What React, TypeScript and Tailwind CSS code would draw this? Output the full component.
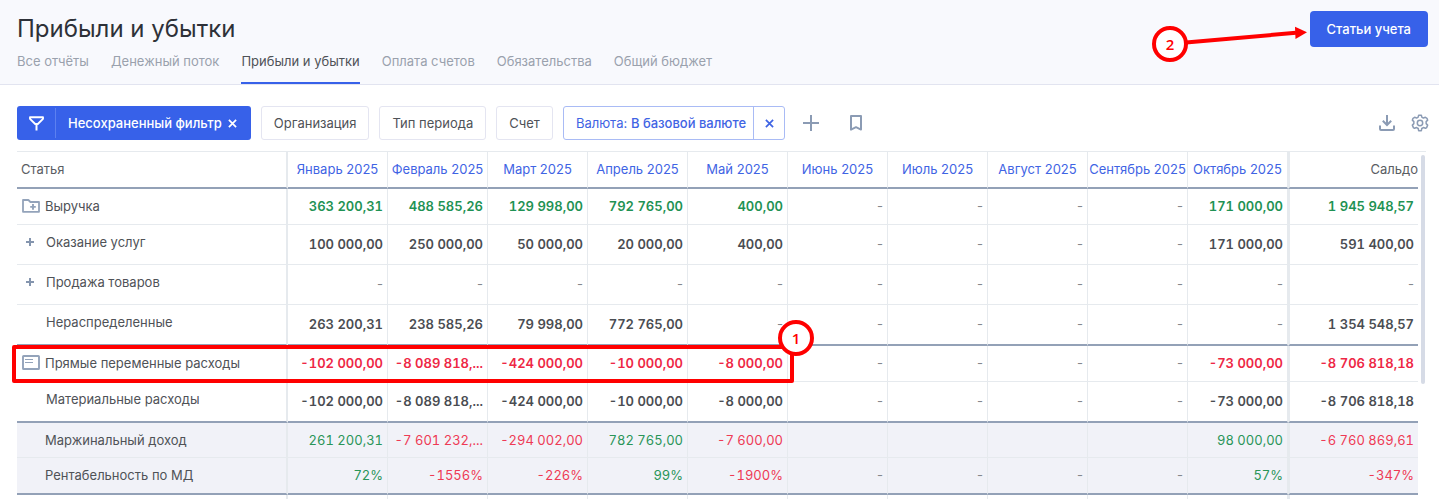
import React from "react";

type Tone = "green" | "red" | "dark";
type Kind = "group" | "sub" | "total";

interface Row {
  name: string;
  kind: Kind;
  icon?: "folder" | "card" | "plus";
  tone?: Tone;
  height: string;
  thick?: boolean;
  values: string[];
}

const months = [
  "Январь 2025",
  "Февраль 2025",
  "Март 2025",
  "Апрель 2025",
  "Май 2025",
  "Июнь 2025",
  "Июль 2025",
  "Август 2025",
  "Сентябрь 2025",
  "Октябрь 2025",
];

const rows: Row[] = [
  {
    name: "Выручка", kind: "group", icon: "folder", tone: "green", height: "h-[36px]",
    values: ["363 200,31", "488 585,26", "129 998,00", "792 765,00", "400,00", "-", "-", "-", "-", "171 000,00", "1 945 948,57"],
  },
  {
    name: "Оказание услуг", kind: "sub", icon: "plus", height: "h-[40px]",
    values: ["100 000,00", "250 000,00", "50 000,00", "20 000,00", "400,00", "-", "-", "-", "-", "171 000,00", "591 400,00"],
  },
  {
    name: "Продажа товаров", kind: "sub", icon: "plus", height: "h-[40px]",
    values: ["-", "-", "-", "-", "-", "-", "-", "-", "-", "-", "-"],
  },
  {
    name: "Нераспределенные", kind: "sub", height: "h-[41px]", thick: true,
    values: ["263 200,31", "238 585,26", "79 998,00", "772 765,00", "-", "-", "-", "-", "-", "-", "1 354 548,57"],
  },
  {
    name: "Прямые переменные расходы", kind: "group", icon: "card", tone: "red", height: "h-[36px]",
    values: ["-102 000,00", "-8 089 818,...", "-424 000,00", "-10 000,00", "-8 000,00", "-", "-", "-", "-", "-73 000,00", "-8 706 818,18"],
  },
  {
    name: "Материальные расходы", kind: "sub", height: "h-[41px]", thick: true,
    values: ["-102 000,00", "-8 089 818,...", "-424 000,00", "-10 000,00", "-8 000,00", "-", "-", "-", "-", "-73 000,00", "-8 706 818,18"],
  },
  {
    name: "Маржинальный доход", kind: "total", height: "h-[35px]",
    values: ["261 200,31", "-7 601 232,...", "-294 002,00", "782 765,00", "-7 600,00", "", "", "", "", "98 000,00", "-6 760 869,61"],
  },
  {
    name: "Рентабельность по МД", kind: "total", height: "h-[37px]", thick: true,
    values: ["72%", "-1556%", "-226%", "99%", "-1900%", "-", "-", "-", "-", "57%", "-347%"],
  },
];

function valueStyle(row: Row, value: string): string {
  if (value === "-") return "text-[#85888d] font-normal";
  if (row.kind === "total") return value.startsWith("-") ? "tabular-nums text-[#ee3a55]" : "tabular-nums text-[#2a9558]";
  if (row.tone === "green") return "tabular-nums text-[#1f9254] font-semibold";
  if (row.tone === "red") return "tabular-nums text-[#ee2745] font-semibold";
  return "tabular-nums text-[#4a4d52] font-semibold";
}

function RowIcon({ icon }: { icon?: Row["icon"] }) {
  if (icon === "folder")
    return (
      <svg className="h-[14px] w-[18px] shrink-0" viewBox="0 0 18 14" fill="none" aria-hidden="true">
        <path d="M1 12.8V1h5.4l2 2H17v9.8Z" stroke="#93a3ba" strokeWidth="1.8" strokeLinejoin="round" />
        <path d="M8.2 7.9h5.6M11 5.1v5.6" stroke="#93a3ba" strokeWidth="1.9" />
      </svg>
    );
  if (icon === "card")
    return (
      <svg className="h-[15px] w-[18px] shrink-0" viewBox="0 0 18 15" fill="none" aria-hidden="true">
        <rect x="1" y="1" width="16" height="13" rx="0.6" stroke="#93a3ba" strokeWidth="1.9" />
        <path d="M3 4.5h8M3 7.5h8" stroke="#93a3ba" strokeWidth="1.2" />
      </svg>
    );
  if (icon === "plus")
    return (
      <svg className="h-[8px] w-[8px] shrink-0" viewBox="0 0 8 8" aria-hidden="true">
        <path d="M0 4h8M4 0v8" stroke="#8495ae" strokeWidth="2" />
      </svg>
    );
  return null;
}

function Cross({ className }: { className: string }) {
  return (
    <svg className={className} viewBox="0 0 10 10" fill="none" stroke="currentColor" aria-hidden="true">
      <path d="M1 1l8 8M9 1L1 9" strokeWidth="1.9" />
    </svg>
  );
}

function Header() {
  const tabs = ["Все отчёты", "Денежный поток", "Прибыли и убытки", "Оплата счетов", "Обязательства", "Общий бюджет"];
  return (
    <header className="flex items-start justify-between border-b border-[#e2e4f0] bg-[#f8f9fd] pr-[11px] pl-[17px]">
      <div className="pt-[13px]">
        <h1 className="text-2xl text-[#2e3138]">Прибыли и убытки</h1>
        <nav className="mt-[6px] flex gap-[22px] text-[13px] leading-5">
          {tabs.map((t) => (
            <a
              key={t}
              href="#"
              className={
                t === "Прибыли и убытки"
                  ? "border-b-2 border-[#3761e9] pb-[11px] whitespace-nowrap text-[#4f5257]"
                  : "border-b-2 border-transparent pb-[11px] whitespace-nowrap text-[#9aa1ad]"
              }
            >
              {t}
            </a>
          ))}
        </nav>
      </div>
      <button className="mt-[11px] h-[36px] rounded bg-[#3761e9] px-[17px] pt-px text-[13px] font-medium text-white">
        Статьи учета
      </button>
    </header>
  );
}

function Toolbar() {
  const chip = "h-[34px] rounded-[3px] border border-[#e4e5f1] px-[12px] pt-px text-[#4f5257]";
  return (
    <div className="flex items-center justify-between pt-[21px] pr-[10px] pb-[11px] pl-[17px] text-[13px]">
      <div className="flex items-center gap-[10px]">
        <div className="flex h-[34px] items-center rounded-[3px] bg-[#3761e9] text-white">
          <button className="flex h-[30px] w-[39px] items-center justify-center border-r border-[#5c80f0]" aria-label="Фильтр">
            <svg className="h-[15px] w-[15px]" viewBox="0 0 15 15" fill="none" stroke="currentColor" aria-hidden="true">
              <path d="M1 1.2h13v1.6L8.8 8h-2.6L1 2.8Z" strokeWidth="1.9" strokeLinejoin="round" />
              <path d="M7.5 8v6.5" strokeWidth="2" />
            </svg>
          </button>
          <button className="flex items-center gap-[6px] pt-px pr-[14px] pl-[12px] font-medium whitespace-nowrap">
            Несохраненный фильтр
            <Cross className="h-[9px] w-[9px]" />
          </button>
        </div>
        <button className={chip}>Организация</button>
        <button className={chip}>Тип периода</button>
        <button className={chip}>Счет</button>
        <div className="flex h-[34px] items-stretch rounded-[3px] border border-[#a9bbf5] text-[#3f64e4]">
          <button className="pt-px pr-[7px] pl-[12px] whitespace-nowrap">
            Валюта: <span className="font-medium">В базовой валюте</span>
          </button>
          <button className="flex w-[31px] items-center justify-center border-l border-[#a9bbf5] pt-px" aria-label="Убрать">
            <Cross className="h-[9px] w-[9px]" />
          </button>
        </div>
        <button className="ml-2 text-[#8b9bb4]" aria-label="Добавить">
          <svg className="h-4 w-4" viewBox="0 0 16 16" stroke="currentColor" aria-hidden="true">
            <path d="M0 8h16M8 0v16" strokeWidth="2" />
          </svg>
        </button>
        <button className="ml-5 text-[#8b9bb4]" aria-label="Закладка">
          <svg className="h-4 w-[14px]" viewBox="0 0 14 16" fill="none" stroke="currentColor" aria-hidden="true">
            <path d="M2 14.6V1h10v13.6L7 12.2Z" strokeWidth="2" strokeLinejoin="round" />
          </svg>
        </button>
      </div>
      <div className="flex items-center gap-4 text-[#8b9bb4]">
        <button aria-label="Скачать">
          <svg className="h-4 w-4" viewBox="0 0 16 16" fill="none" stroke="currentColor" aria-hidden="true">
            <path d="M8 0v9.5M3.8 5.8L8 10l4.2-4.2" strokeWidth="2" />
            <path d="M1 10.5V14a1 1 0 0 0 1 1h12a1 1 0 0 0 1-1v-3.5" strokeWidth="2" />
          </svg>
        </button>
        <button aria-label="Настройки">
          <svg className="h-[18px] w-[18px]" viewBox="0 0 24 24" fill="none" stroke="currentColor" strokeLinejoin="round" aria-hidden="true">
            <path
              d="M9.6 4.2 10.2 1.5h3.6l.6 2.7 2.1 1.2 2.7-1 2.1 1.3.9 2.5-2 2v2.6l2 2-1.4 3.4-1.4.9-2.9-1-2.1 1.2-.6 2.9h-3.6l-.6-2.9-2.1-1.2-2.9 1-1.4-.9-1.4-3.4 2-2v-2.6l-2-2 .9-2.5 2.1-1.3 2.7 1Z"
              strokeWidth="2"
            />
            <circle cx="12" cy="12" r="3.6" strokeWidth="2" />
          </svg>
        </button>
      </div>
    </div>
  );
}

function ReportTable() {
  return (
    <table className="w-full table-fixed border-separate border-spacing-0 border-t border-[#e6eaee] text-[13px] leading-5">
      <colgroup>
        <col className="w-[271px]" />
        {months.map((m) => (
          <col key={m} className="w-[100px]" />
        ))}
        <col />
      </colgroup>
      <thead>
        <tr className="h-[37px]">
          <th className="border-r-2 border-b-2 border-r-[#e6eaee] border-b-[#93a1b7] pt-0 pb-[2px] pl-1 text-left font-normal text-[#5a5d63]">Статья</th>
          {months.map((m) => (
            <th key={m} className="border-r border-b-2 border-r-[#e6eaee] border-b-[#93a1b7] px-0 pt-0 pb-[2px] text-center font-normal whitespace-nowrap">
              <a href="#" className="text-[#3f64e4]">{m}</a>
            </th>
          ))}
          <th className="border-b-2 border-l-2 border-b-[#93a1b7] border-l-[#e6eaee] pt-0 pr-0 pb-[2px] pl-0 text-right font-normal text-[#5a5d63]">Сальдо</th>
        </tr>
      </thead>
      <tbody>
        {rows.map((row) => {
          const line = row.thick ? "border-b-2 border-b-[#93a1b7]" : "border-b border-b-[#e6eaee]";
          const bg = row.kind === "total" ? "bg-[#f1f2f8]" : "";
          const pad = row.kind === "sub" ? "pb-[6px]" : row.kind === "total" ? "pb-px" : "pb-[2px]";
          const valuePad = row.kind === "total" ? "pb-px" : "pb-[2px]";
          return (
            <tr key={row.name} className={`${row.height} ${bg}`}>
              <th scope="row" className={`border-r-2 border-r-[#e6eaee] px-0 pt-0 text-left font-normal text-[#4f5257] ${line} ${pad}`}>
                <div className="flex items-center">
                  <span className={row.kind === "sub" ? "flex w-[29px] justify-center pr-[3px]" : "flex w-[28px] pl-[5px]"}>
                    <RowIcon icon={row.icon} />
                  </span>
                  {row.name}
                </div>
              </th>
              {row.values.map((v, i) => (
                <td
                  key={i}
                  className={`pt-0 pr-1 pl-0 text-right whitespace-nowrap ${valuePad} ${line} ${
                    i === 10 ? "border-l-2 border-l-[#e6eaee]" : "border-r border-r-[#e6eaee]"
                  } ${valueStyle(row, v)}`}
                >
                  {v}
                </td>
              ))}
            </tr>
          );
        })}
        <tr className="h-[4px]" aria-hidden="true">
          <td className="border-r-2 border-[#e6eaee] p-0" />
          {months.map((m) => (
            <td key={m} className="border-r border-[#e6eaee] p-0" />
          ))}
          <td className="border-l-2 border-[#e6eaee] p-0" />
        </tr>
      </tbody>
    </table>
  );
}

const badge =
  "absolute flex h-9 w-9 items-center justify-center rounded-full border-4 border-[#ff0000] bg-white font-['Open_Sans',sans-serif] text-[15px] font-semibold text-[#ff0000]";

function Annotations() {
  return (
    <>
      <div className="pointer-events-none absolute top-[345px] left-[12px] h-[38px] w-[782px] rounded-[2px] border-4 border-[#ff0000]" />
      <div className={`${badge} top-[320px] left-[778px]`}>1</div>
      <svg className="pointer-events-none absolute top-[20px] right-[131px] h-[30px] w-[124px]" viewBox="0 0 124 30" aria-hidden="true">
        <path d="M2 22.6L112 12.8" stroke="#ff0000" strokeWidth="4" />
        <path d="M111 6.8L123 12.2L111.5 19Z" fill="#ff0000" />
      </svg>
      <div className={`${badge} top-[26px] right-[251px]`}>2</div>
    </>
  );
}

export default function App() {
  return (
    <div className="relative overflow-hidden bg-white font-['Inter',sans-serif]">
      <Header />
      <Toolbar />
      <main className="flex pr-[13px] pl-[17px]">
        <div className="min-w-0 flex-1">
          <ReportTable />
        </div>
        <div className="w-2 border-t border-[#e6eaee] pt-[3px] pl-[3px]">
          <div className="h-[229px] w-1 rounded-full bg-[#d6dbe6]" />
        </div>
      </main>
      <Annotations />
    </div>
  );
}
